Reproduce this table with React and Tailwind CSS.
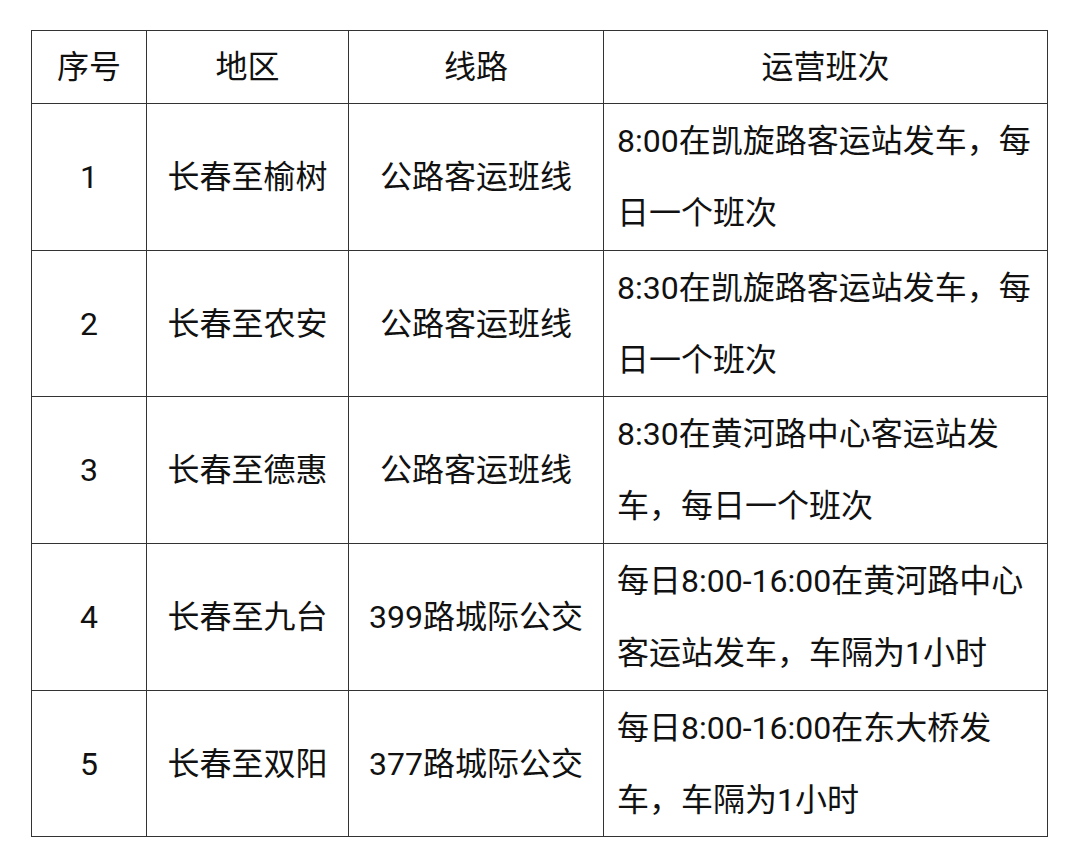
import React from "react";

const rows = [
  ["1", "长春至榆树", "公路客运班线", "8:00在凯旋路客运站发车，每日一个班次", "h-[147px]"],
  ["2", "长春至农安", "公路客运班线", "8:30在凯旋路客运站发车，每日一个班次", "h-[146px]"],
  ["3", "长春至德惠", "公路客运班线", "8:30在黄河路中心客运站发车，每日一个班次", "h-[147px]"],
  ["4", "长春至九台", "399路城际公交", "每日8:00-16:00在黄河路中心客运站发车，车隔为1小时", "h-[147px]"],
  ["5", "长春至双阳", "377路城际公交", "每日8:00-16:00在东大桥发车，车隔为1小时", "h-[146px]"],
];

export default function App() {
  return (
    <div
      className="w-[1080px] h-[858px] bg-white pt-[30px] pl-[31px] text-[#111] text-[32px]"
      style={{ fontFamily: '"Roboto", "Noto Sans CJK SC", sans-serif' }}
    >
      <table className="table-fixed border-collapse w-[1016px]">
        <colgroup>
          <col className="w-[115px]" />
          <col className="w-[202px]" />
          <col className="w-[255px]" />
          <col className="w-[444px]" />
        </colgroup>
        <thead>
          <tr className="h-[73px]">
            {["序号", "地区", "线路", "运营班次"].map((h) => (
              <th
                key={h}
                className="border border-[#333] font-normal text-center leading-[72px] p-0"
              >
                {h}
              </th>
            ))}
          </tr>
        </thead>
        <tbody>
          {rows.map(([n, area, line, info, h]) => (
            <tr key={n} className={h}>
              <td className="border border-[#333] text-center leading-[72px] p-0">{n}</td>
              <td className="border border-[#333] text-center leading-[72px] p-0">{area}</td>
              <td className="border border-[#333] text-center leading-[72px] p-0">{line}</td>
              <td className="border border-[#333] text-left leading-[72px] py-0 pl-[13px] pr-[13px]">
                {info}
              </td>
            </tr>
          ))}
        </tbody>
      </table>
    </div>
  );
}
